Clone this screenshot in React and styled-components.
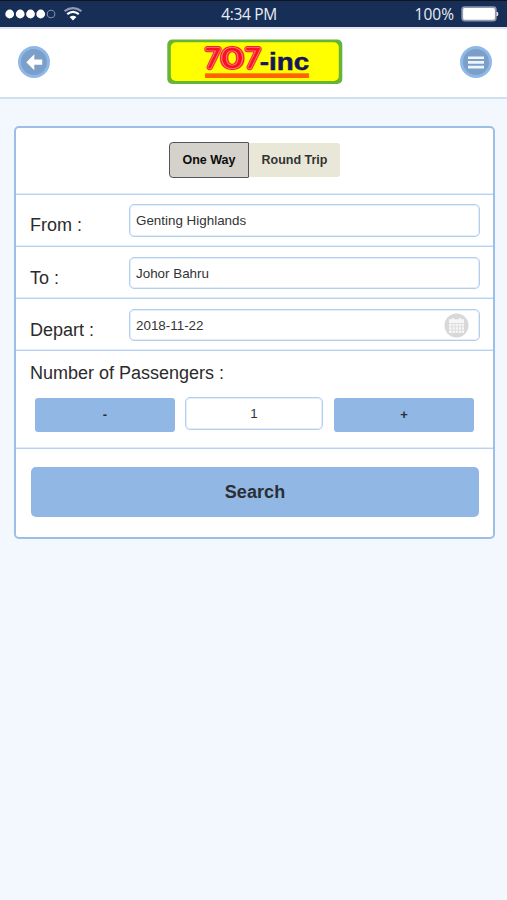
import React, { useState } from 'react';
import styled, { createGlobalStyle } from 'styled-components';

const GlobalStyle = createGlobalStyle`
    * {
        box-sizing : border-box;
    }
    body {
        margin : 0;
        background : #f3f8fe;
        font-family : "Liberation Sans", Arial, sans-serif;
        color : #2b2b2b;
    }
    button, input {
        font-family : inherit;
        margin : 0;
    }
`;

const Page = styled.div`
    min-height : 900px;
    background : #f3f8fe;
`;

const StatusBar = styled.div`
    display : grid;
    grid-template-columns : 1fr auto 1fr;
    align-items : center;
    height : 27px;
    padding : 0 8px 1px 5px;
    border-top : 1px solid #10141f;
    background : #172e57;
    color : #e9edf4;
    font : 15.5px/24px "Open Sans", "Noto Sans", sans-serif;
    letter-spacing : -0.35px;
`;

const StatusSide = styled.div`
    display : flex;
    align-items : center;
    gap : 7px;
    justify-content : ${({ $end }) => ($end ? 'flex-end' : 'flex-start')};
`;

const Percent = styled.span`
    letter-spacing : 0;
`;

const Clock = styled.span`
    padding-right : 6px;
`;

const Header = styled.header`
    display : flex;
    align-items : center;
    justify-content : space-between;
    height : 72px;
    padding : 0 15px 2px 18px;
    border-top : 2px solid #e4e4f0;
    border-bottom : 2px solid #cfe0f1;
    background : #fff;
`;

const RoundButton = styled.button`
    display : flex;
    width : 32px;
    height : 32px;
    padding : 0;
    border : 3px solid #8db8e8;
    border-radius : 50%;
    background : #7b9fc9;
`;

const Card = styled.form`
    width : 481px;
    margin : 27px 0 0 14px;
    border : 2px solid #9bbfe6;
    border-radius : 5px;
    background : #fff;
`;

const Row = styled.div`
    display : flex;
    height : ${({ $height }) => $height || 52}px;
    padding : ${({ $low }) => ($low ? 10 : 9)}px 13px 9px 14px;
    border-bottom : 1px solid #b7d2ef;
    box-shadow : inset 0 -1px #e0ecf8;
`;

const TripRow = styled(Row)`
    justify-content : center;
    padding : 14px 0 0;
`;

const TripButton = styled.button`
    width : ${({ $active }) => ($active ? 80 : 91)}px;
    height : ${({ $active }) => ($active ? 36 : 34)}px;
    margin : ${({ $active }) => ($active ? '0' : '1px 0 0')};
    padding : 0 0 1px;
    border : ${({ $active }) => ($active ? '1.5px solid #555' : '0')};
    border-radius : ${({ $active }) => ($active ? '4px 1px 1px 4px' : '0 3px 3px 0')};
    background : ${({ $active }) => ($active ? '#d5d2cb' : '#e9e8d8')};
    color : ${({ $active }) => ($active ? '#0c0c0c' : '#333')};
    font-size : 12.5px;
    font-weight : bold;
`;

const Label = styled.label`
    width : 99px;
    padding-top : 10px;
    font-size : 18px;
    line-height : 22px;
    white-space : nowrap;
`;

const Field = styled.div`
    display : flex;
    align-items : center;
    flex : 1;
    padding : 0 10px 0 6px;
    border : 1px solid #b3cfee;
    border-radius : 5px;
    background : #fff;
    box-shadow : inset 0 0 0 1px #e3eefa;
`;

const Input = styled.input`
    flex : 1;
    min-width : 0;
    padding : 0;
    border : 0;
    outline : 0;
    background : transparent;
    color : #333;
    font-size : 13.4px;
    text-align : ${({ $center }) => ($center ? 'center' : 'left')};
`;

const Passengers = styled.div`
    height : 98px;
    padding : 10px 19px 0 14px;
    border-bottom : 1px solid #b7d2ef;
    box-shadow : inset 0 -1px #e0ecf8;
`;

const PassengersTitle = styled.div`
    font-size : 18px;
    line-height : 24px;
`;

const Counter = styled.div`
    display : flex;
    align-items : flex-end;
    height : 47px;
    padding-left : 5px;
`;

const CountField = styled(Field)`
    flex : none;
    width : 138px;
    height : 33px;
    margin : 0 11px 2px 10px;
    padding : 0 5px;
`;

const BlueButton = styled.button`
    flex : 1;
    height : 34px;
    padding : 0 0 2px;
    border : 0;
    border-radius : 3px;
    background : #91b7e4;
    color : #2b2f33;
    font-size : 13px;
    font-weight : bold;
`;

const SearchRow = styled.div`
    display : flex;
    padding : 18px 14px 20px 15px;
`;

const SearchButton = styled(BlueButton)`
    height : 50px;
    border-radius : 5px;
    font-size : 18px;
    letter-spacing : 0.1px;
    padding : 1px 0 0;
`;

const Signal = () => (
    <svg width="79" height="20" viewBox="0 0 79 20">
        {[4.7, 15.2, 25.5, 35.7].map((cx) => (
            <circle key={cx} cx={cx} cy="10" r="4.4" fill="#fff" />
        ))}
        <circle cx="46" cy="10" r="3.8" fill="none" stroke="#8390a8" strokeWidth="1.1" />
        <g fill="none" strokeWidth="2.2">
            <path d="M59.5 7.2Q68 1 76.5 7.2" stroke="#8e9bb2" />
            <path d="M62.2 10.2Q68 5.7 73.8 10.2" stroke="#fff" />
        </g>
        <path d="M64.6 13Q68 10.5 71.4 13L68 16.4Z" fill="#fff" />
    </svg>
);

const Battery = () => (
    <svg width="38" height="18" viewBox="0 0 38 18">
        <rect x="1.2" y="2.2" width="33.6" height="13.4" rx="2.5" fill="#fff" stroke="#8d99ae" strokeWidth="1.8" />
        <path d="M36 7Q38 9 36 11Z" fill="#dfe4ec" stroke="#dfe4ec" />
    </svg>
);

const Arrow = () => (
    <svg width="26" height="26" viewBox="0 0 26 26">
        <path d="M5.3 13.2L13.3 5.3V10.6H21.2V15.8H13.3V21.2Z" fill="#fff" />
    </svg>
);

const Bars = () => (
    <svg width="26" height="26" viewBox="0 0 26 26">
        <path d="M5 8.7H21M5 13.4H21M5 18.1H21" stroke="#eff5fc" strokeWidth="2.6" />
    </svg>
);

const Calendar = () => (
    <svg width="25" height="25" viewBox="0 0 25 25">
        <circle cx="12.5" cy="12.5" r="12" fill="#d8d8d8" />
        <path d="M5 6.2H8V5H10V6.2H15V5H17V6.2H20V20H5Z" fill="#f6f6f6" />
        <path d="M5 10.5H20M5 13.8H20M5 17H20M8.2 10.5V20M11.3 10.5V20M14.4 10.5V20M17.5 10.5V20" stroke="#dcdcdc" strokeWidth="0.9" />
    </svg>
);

const digits = [
    { char: '7', x: 205.4, width: 14.5 },
    { char: '0', x: 222.6, width: 19.4 },
    { char: '7', x: 245.4, width: 14.5 },
];

// outer glow tube, highlight, core
const tubes = [
    { color: '#f5222d', size: 6 },
    { color: '#ff827c', size: 3.9 },
    { color: '#fa1020', size: 2.4 },
];

const Logo = () => (
    <svg width="176" height="46" viewBox="167 39 176 46">
        <rect x="167.3" y="39.5" width="175" height="44.5" rx="5" fill="#67b437" />
        <rect x="170.8" y="42.3" width="168" height="38.7" rx="5" fill="#ff0" />
        <g fontFamily="Lato" fontWeight="100" fontSize="25" strokeLinejoin="round">
            {digits.map(({ char, x, width }) => tubes.map(({ color, size }) => (
                <text key={`${x}${color}`} x={x} y="66.8" textLength={width} lengthAdjust="spacingAndGlyphs" fill={color} stroke={color} strokeWidth={size}>
                    {char}
                </text>
            )))}
        </g>
        <text x="259.8" y="69.8" textLength="49.3" lengthAdjust="spacingAndGlyphs" fontFamily="Liberation Sans" fontWeight="bold" fontSize="23" fill="#15155e" stroke="#15155e" strokeWidth="0.5">-inc</text>
        <rect x="205" y="73.3" width="104" height="4.7" fill="#ff6400" />
    </svg>
);

const App = () => {
    const [trip, setTrip] = useState('One Way');
    const [count, setCount] = useState(1);
    return (
        <Page>
            <GlobalStyle />
            <StatusBar>
                <StatusSide><Signal /></StatusSide>
                <Clock>4:34 PM</Clock>
                <StatusSide $end><Percent>100%</Percent><Battery /></StatusSide>
            </StatusBar>
            <Header>
                <RoundButton aria-label="Back"><Arrow /></RoundButton>
                <Logo />
                <RoundButton aria-label="Menu"><Bars /></RoundButton>
            </Header>
            <Card onSubmit={(e) => e.preventDefault()}>
                <TripRow $height={67}>
                    {['One Way', 'Round Trip'].map((name) => (
                        <TripButton key={name} type="button" $active={trip === name} onClick={() => setTrip(name)}>
                            {name}
                        </TripButton>
                    ))}
                </TripRow>
                <Row>
                    <Label>From :</Label>
                    <Field><Input defaultValue="Genting Highlands" /></Field>
                </Row>
                <Row $low>
                    <Label>To :</Label>
                    <Field><Input defaultValue="Johor Bahru" /></Field>
                </Row>
                <Row $low>
                    <Label>Depart :</Label>
                    <Field>
                        <Input defaultValue="2018-11-22" />
                        <Calendar />
                    </Field>
                </Row>
                <Passengers>
                    <PassengersTitle>Number of Passengers :</PassengersTitle>
                    <Counter>
                        <BlueButton type="button" onClick={() => setCount(Math.max(1, count - 1))}>-</BlueButton>
                        <CountField><Input $center readOnly value={count} /></CountField>
                        <BlueButton type="button" onClick={() => setCount(count + 1)}>+</BlueButton>
                    </Counter>
                </Passengers>
                <SearchRow>
                    <SearchButton>Search</SearchButton>
                </SearchRow>
            </Card>
        </Page>
    );
}

export default App;
